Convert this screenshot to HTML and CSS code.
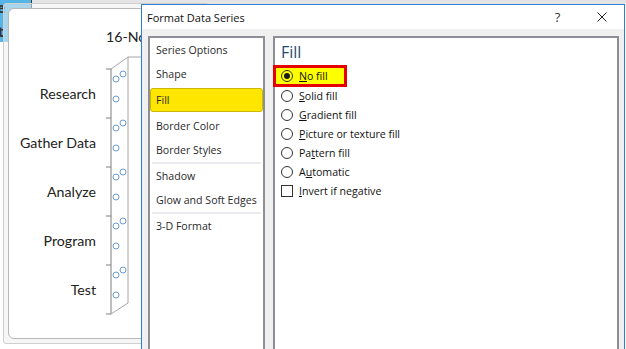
FILE: index.html
```html
<!DOCTYPE html>
<html lang="en">
<head>
  <meta charset="UTF-8">
  <title>Format Data Series</title>
  <link rel="stylesheet" href="styles.css">
</head>
<body>

  <div class="sheet">
    <div class="topbar"></div>
    <div class="cell-blue"><span class="frag-e">e</span><span class="frag-t">t</span></div>

    <div class="chart-frame">
      <div class="plot">
        <svg class="chart" width="220" height="329" viewBox="0 0 220 329">
          <g transform="translate(-9,-9)">
            <text x="106" y="42" class="date">16-Nov</text>

            <line x1="111" y1="69" x2="111" y2="314" class="axis"/>
            <line x1="111" y1="69" x2="128" y2="57" class="back"/>
            <line x1="128" y1="57" x2="128" y2="303" class="back"/>
            <line x1="128" y1="57" x2="150" y2="57" class="back"/>
            <line x1="111" y1="314" x2="128" y2="303" class="back"/>

            <line x1="106" y1="69" x2="111" y2="69" class="axis"/>
            <line x1="106" y1="118" x2="111" y2="118" class="axis"/>
            <line x1="106" y1="167" x2="111" y2="167" class="axis"/>
            <line x1="106" y1="216" x2="111" y2="216" class="axis"/>
            <line x1="106" y1="265" x2="111" y2="265" class="axis"/>
            <line x1="106" y1="314" x2="111" y2="314" class="axis"/>

            <text x="96" y="99" class="cat">Research</text>
            <text x="96" y="148" class="cat">Gather Data</text>
            <text x="96" y="197" class="cat">Analyze</text>
            <text x="96" y="246" class="cat">Program</text>
            <text x="96" y="295" class="cat">Test</text>

            <g class="dots">
              <circle cx="116" cy="79" r="3"/><circle cx="123" cy="74" r="3"/><circle cx="116" cy="99" r="3"/>
              <circle cx="116" cy="128" r="3"/><circle cx="123" cy="123" r="3"/><circle cx="116" cy="148" r="3"/>
              <circle cx="116" cy="177" r="3"/><circle cx="123" cy="172" r="3"/><circle cx="116" cy="197" r="3"/>
              <circle cx="116" cy="226" r="3"/><circle cx="123" cy="221" r="3"/><circle cx="116" cy="246" r="3"/>
              <circle cx="116" cy="275" r="3"/><circle cx="123" cy="270" r="3"/><circle cx="116" cy="295" r="3"/>
            </g>
          </g>
        </svg>
      </div>
    </div>
  </div>

  <div class="dialog">
    <div class="titlebar">
      <div class="title">Format Data Series</div>
      <div class="ctrl help">?</div>
      <div class="ctrl close">
        <svg width="10" height="10" viewBox="0 0 10 10"><path d="M0.5 0.5 L9.5 9.5 M9.5 0.5 L0.5 9.5" stroke="#222" stroke-width="1"/></svg>
      </div>
    </div>

    <div class="dlg-body">
      <div class="nav">
        <div class="nav-item">Series Options</div>
        <div class="nav-item">Shape</div>
        <div class="nav-item active">Fill</div>
        <div class="nav-item">Border Color</div>
        <div class="nav-item">Border Styles</div>
        <div class="nav-sep"></div>
        <div class="nav-item">Shadow</div>
        <div class="nav-item">Glow and Soft Edges</div>
        <div class="nav-sep"></div>
        <div class="nav-item">3-D Format</div>
      </div>

      <div class="pane">
        <div class="pane-title">Fill</div>
        <div class="opts">
          <div class="opt marked"><span class="radio on"></span><span><u>N</u>o fill</span></div>
          <div class="opt"><span class="radio"></span><span><u>S</u>olid fill</span></div>
          <div class="opt"><span class="radio"></span><span><u>G</u>radient fill</span></div>
          <div class="opt"><span class="radio"></span><span><u>P</u>icture or texture fill</span></div>
          <div class="opt"><span class="radio"></span><span>Pa<u>t</u>tern fill</span></div>
          <div class="opt"><span class="radio"></span><span>A<u>u</u>tomatic</span></div>
          <div class="opt"><span class="check"></span><span><u>I</u>nvert if negative</span></div>
        </div>
      </div>
    </div>
  </div>

</body>
</html>
```

FILE: styles.css
```css
body {
  margin: 0;
  width: 626px;
  height: 349px;
  overflow: hidden;
  background: #fff;
  font-family: 'Open Sans', 'Noto Sans', sans-serif;
  position: relative;
}
.sheet {
  width: 626px;
  height: 349px;
  position: relative;
}
.topbar {
  height: 4px;
  margin-left: 32px;
  background: #e4e4e4;
}
.cell-blue {
  position: absolute;
  left: 0;
  top: 0;
  width: 31px;
  height: 42px;
  background: #55b5e6;
  border-right: 1px solid #3a3a3a;
  overflow: hidden;
  font-family: 'Noto Sans', sans-serif;
  font-size: 14px;
  font-weight: bold;
  color: #333;
}
.frag-e {
  position: absolute;
  left: -3px;
  top: -2px;
}
.frag-t {
  position: absolute;
  left: -2px;
  top: 22px;
}
.chart-frame {
  position: absolute;
  left: 3px;
  top: 3px;
  width: 200px;
  height: 331px;
  padding: 4px 0 4px 4px;
  border: 1px solid #cfcfcf;
  border-radius: 3px;
  background: rgba(238,238,238,0.55);
}
.plot {
  height: 329px;
  background: #fff;
  border: 1px solid #b8b8b8;
  border-radius: 6px 0 0 6px;
  overflow: hidden;
}
.chart {
  display: block;
}
.chart .axis {
  stroke: #7f7f7f;
  stroke-width: 1;
}
.chart .back {
  stroke: #a6a6a6;
  stroke-width: 1;
}
.chart .cat {
  font-family: Lato, sans-serif;
  font-size: 14.2px;
  fill: #222;
  text-anchor: end;
}
.chart .date {
  font-family: Lato, sans-serif;
  font-size: 14.2px;
  fill: #222;
}
.chart .dots circle {
  fill: #fff;
  stroke: #6a9bd0;
  stroke-width: 1;
}

.dialog {
  position: absolute;
  left: 141px;
  top: 4px;
  width: 482px;
  height: 344px;
  border: 1px solid #2b7fd4;
  background: #f0f0f0;
  overflow: hidden;
}
.titlebar {
  height: 24px;
  background: #fff;
  display: flex;
  align-items: center;
}
.title {
  flex: 1;
  padding-left: 5px;
  font-size: 11px;
  color: #111;
}
.ctrl {
  width: 45px;
  height: 24px;
  display: flex;
  align-items: center;
  justify-content: center;
  font-size: 13px;
  color: #333;
}
.close {
  width: 44px;
}
.dlg-body {
  display: flex;
  gap: 8px;
  padding: 7px 5px 0 6px;
}
.nav {
  width: 113px;
  height: 330px;
  background: #fff;
  border: 2px solid #8e8e96;
  font-size: 10.6px;
  color: #2a2a2a;
}
.nav-item {
  height: 24px;
  line-height: 24px;
  padding-left: 6px;
}
.nav-item.active {
  height: 22px;
  line-height: 22px;
  margin: 2px 0;
  padding-left: 5px;
  background: #ffe600;
  border: 1px solid #cdb800;
  border-radius: 3px;
}
.nav-sep {
  height: 2px;
  margin: 0 2px;
  background: #eaeaf0;
}
.pane {
  flex: 1;
  height: 330px;
  background: #fff;
  border: 2px solid #8e8e96;
  padding-left: 6px;
}
.pane-title {
  margin-top: 3px;
  height: 22px;
  line-height: 22px;
  font-size: 16px;
  color: #1f4a78;
  margin-bottom: 2px;
}
.opts {
  display: flex;
  flex-direction: column;
  font-size: 10.6px;
  color: #111;
}
.opt {
  height: 19px;
  display: flex;
  align-items: center;
  gap: 6px;
}
.opt.marked {
  box-sizing: border-box;
  width: 74px;
  height: 22px;
  margin-left: -8px;
  margin-bottom: -1px;
  padding-left: 5px;
  border: 3px solid #e60000;
  background: #ffff00;
}
.radio {
  box-sizing: border-box;
  width: 12px;
  height: 12px;
  border: 1px solid #333;
  border-radius: 50%;
  background: #fff;
  display: flex;
  align-items: center;
  justify-content: center;
}
.radio.on::after {
  content: "";
  width: 6px;
  height: 6px;
  border-radius: 50%;
  background: #1a1a1a;
}
.marked .radio {
  background: transparent;
}
.check {
  box-sizing: border-box;
  width: 12px;
  height: 12px;
  border: 1px solid #333;
  background: #fff;
}
```
